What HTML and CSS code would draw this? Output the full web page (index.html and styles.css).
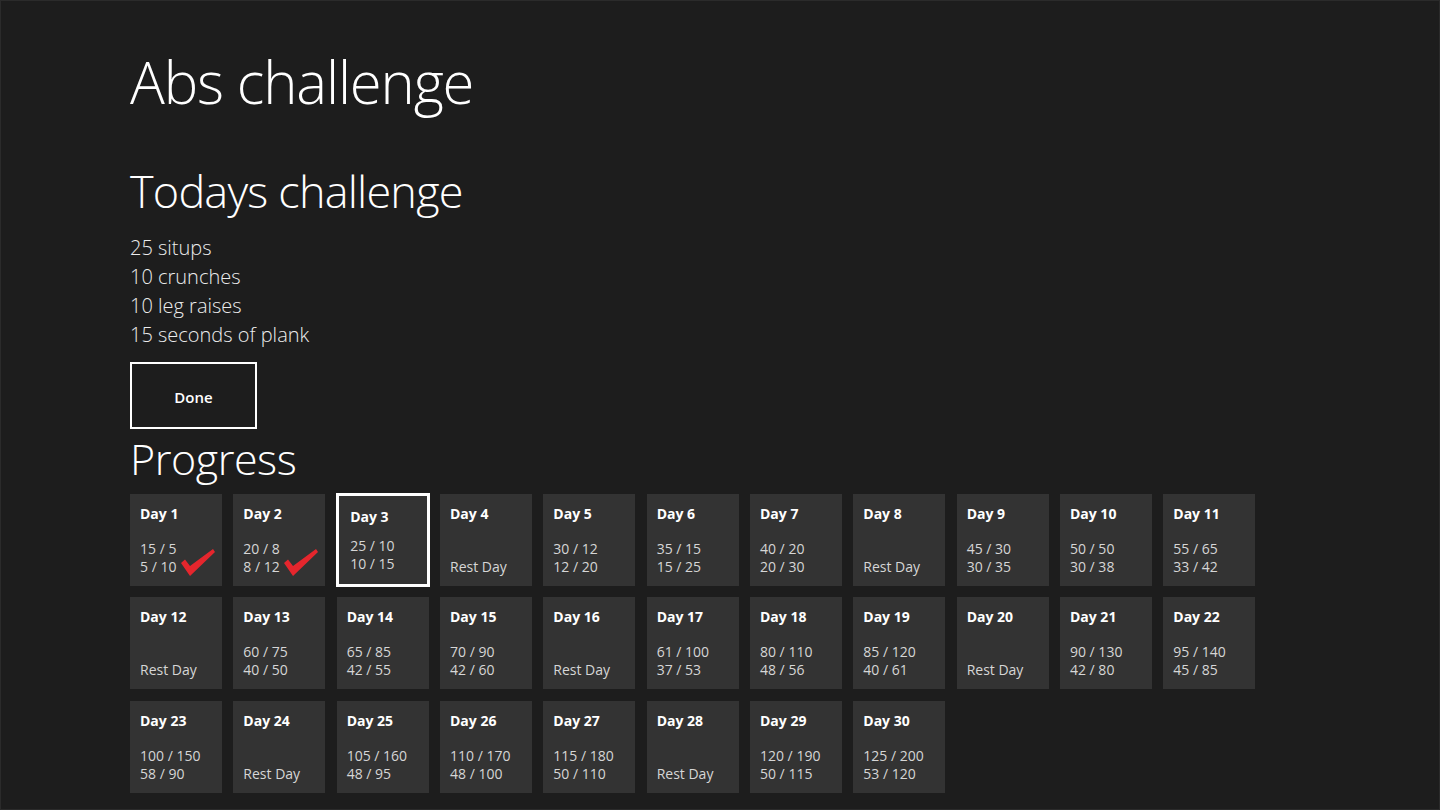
FILE: index.html
```html
<!DOCTYPE html>
<html lang="en">
<head>
<meta charset="utf-8">
<title>Abs challenge</title>
<link rel="stylesheet" href="styles.css">
</head>
<body>
<div class="page">
  <h1 class="title">Abs challenge</h1>
  <h2 class="subtitle">Todays challenge</h2>
  <ul class="todo">
    <li>25 situps</li>
    <li>10 crunches</li>
    <li>10 leg raises</li>
    <li>15 seconds of plank</li>
  </ul>
  <button class="done">Done</button>
  <h2 class="progress-title">Progress</h2>
  <div class="grid">
    <div class="tile"><div class="day">Day 1</div><div class="reps"><div>15 / 5</div><div>5 / 10</div></div><svg class="check" viewBox="0 0 36 28"><polygon points="0,14 4,10.5 9,17 32,0 34,3 9,27" /></svg></div>
    <div class="tile"><div class="day">Day 2</div><div class="reps"><div>20 / 8</div><div>8 / 12</div></div><svg class="check" viewBox="0 0 36 28"><polygon points="0,14 4,10.5 9,17 32,0 34,3 9,27" /></svg></div>
    <div class="tile current"><div class="day">Day 3</div><div class="reps"><div>25 / 10</div><div>10 / 15</div></div></div>
    <div class="tile"><div class="day">Day 4</div><div class="reps"><div>Rest Day</div></div></div>
    <div class="tile"><div class="day">Day 5</div><div class="reps"><div>30 / 12</div><div>12 / 20</div></div></div>
    <div class="tile"><div class="day">Day 6</div><div class="reps"><div>35 / 15</div><div>15 / 25</div></div></div>
    <div class="tile"><div class="day">Day 7</div><div class="reps"><div>40 / 20</div><div>20 / 30</div></div></div>
    <div class="tile"><div class="day">Day 8</div><div class="reps"><div>Rest Day</div></div></div>
    <div class="tile"><div class="day">Day 9</div><div class="reps"><div>45 / 30</div><div>30 / 35</div></div></div>
    <div class="tile"><div class="day">Day 10</div><div class="reps"><div>50 / 50</div><div>30 / 38</div></div></div>
    <div class="tile"><div class="day">Day 11</div><div class="reps"><div>55 / 65</div><div>33 / 42</div></div></div>
    <div class="tile"><div class="day">Day 12</div><div class="reps"><div>Rest Day</div></div></div>
    <div class="tile"><div class="day">Day 13</div><div class="reps"><div>60 / 75</div><div>40 / 50</div></div></div>
    <div class="tile"><div class="day">Day 14</div><div class="reps"><div>65 / 85</div><div>42 / 55</div></div></div>
    <div class="tile"><div class="day">Day 15</div><div class="reps"><div>70 / 90</div><div>42 / 60</div></div></div>
    <div class="tile"><div class="day">Day 16</div><div class="reps"><div>Rest Day</div></div></div>
    <div class="tile"><div class="day">Day 17</div><div class="reps"><div>61 / 100</div><div>37 / 53</div></div></div>
    <div class="tile"><div class="day">Day 18</div><div class="reps"><div>80 / 110</div><div>48 / 56</div></div></div>
    <div class="tile"><div class="day">Day 19</div><div class="reps"><div>85 / 120</div><div>40 / 61</div></div></div>
    <div class="tile"><div class="day">Day 20</div><div class="reps"><div>Rest Day</div></div></div>
    <div class="tile"><div class="day">Day 21</div><div class="reps"><div>90 / 130</div><div>42 / 80</div></div></div>
    <div class="tile"><div class="day">Day 22</div><div class="reps"><div>95 / 140</div><div>45 / 85</div></div></div>
    <div class="tile"><div class="day">Day 23</div><div class="reps"><div>100 / 150</div><div>58 / 90</div></div></div>
    <div class="tile"><div class="day">Day 24</div><div class="reps"><div>Rest Day</div></div></div>
    <div class="tile"><div class="day">Day 25</div><div class="reps"><div>105 / 160</div><div>48 / 95</div></div></div>
    <div class="tile"><div class="day">Day 26</div><div class="reps"><div>110 / 170</div><div>48 / 100</div></div></div>
    <div class="tile"><div class="day">Day 27</div><div class="reps"><div>115 / 180</div><div>50 / 110</div></div></div>
    <div class="tile"><div class="day">Day 28</div><div class="reps"><div>Rest Day</div></div></div>
    <div class="tile"><div class="day">Day 29</div><div class="reps"><div>120 / 190</div><div>50 / 115</div></div></div>
    <div class="tile"><div class="day">Day 30</div><div class="reps"><div>125 / 200</div><div>53 / 120</div></div></div>
  </div>
</div>
</body>
</html>
```
FILE: styles.css
```css
html, body {
  margin: 0;
  padding: 0;
  background: #1d1d1d;
}

body {
  font-family: "Segoe UI", "Open Sans", sans-serif;
  color: #ffffff;
}

.page {
  box-sizing: border-box;
  width: 1440px;
  height: 810px;
  border: 1px solid #2b2b2b;
  padding: 46px 0 0 129px;
  overflow: hidden;
}

.title {
  margin: 0;
  font-size: 58px;
  font-weight: 300;
  line-height: 70px;
  letter-spacing: -1.15px;
}

.subtitle {
  margin: 46px 0 0;
  font-size: 45px;
  font-weight: 300;
  line-height: 56px;
  letter-spacing: -0.8px;
}

.todo {
  list-style: none;
  margin: 14px 0 0;
  padding: 0;
  font-size: 20px;
  font-weight: 300;
  line-height: 29px;
  color: #ececec;
}

.done {
  display: flex;
  align-items: center;
  justify-content: center;
  margin: 13px 0 0;
  width: 127px;
  height: 67px;
  box-sizing: border-box;
  border: 2px solid #ffffff;
  background: transparent;
  color: #ffffff;
  font-family: inherit;
  font-size: 15px;
  font-weight: 600;
  padding: 3px 0 0;
}

.progress-title {
  margin: 4px 0 0;
  font-size: 43px;
  font-weight: 300;
  line-height: 52px;
  letter-spacing: -0.45px;
}

.grid {
  display: grid;
  grid-template-columns: repeat(11, 92px);
  grid-auto-rows: 92px;
  gap: 11.33px;
  margin: 9px 0 0;
}

.tile {
  position: relative;
  box-sizing: border-box;
  background: #333333;
  padding: 11px 10px 10px;
  display: flex;
  flex-direction: column;
  justify-content: space-between;
  font-size: 14px;
  line-height: 18px;
}

.tile.current {
  outline: 3px solid #ffffff;
  outline-offset: -2px;
  padding: 14px 13px 13px 13.5px;
}

.day {
  font-weight: 700;
  color: #ffffff;
}

.reps {
  color: #d6d6d6;
}

.check {
  position: absolute;
  left: 51px;
  top: 55px;
  width: 36px;
  height: 28px;
  fill: #e5262d;
}
```
